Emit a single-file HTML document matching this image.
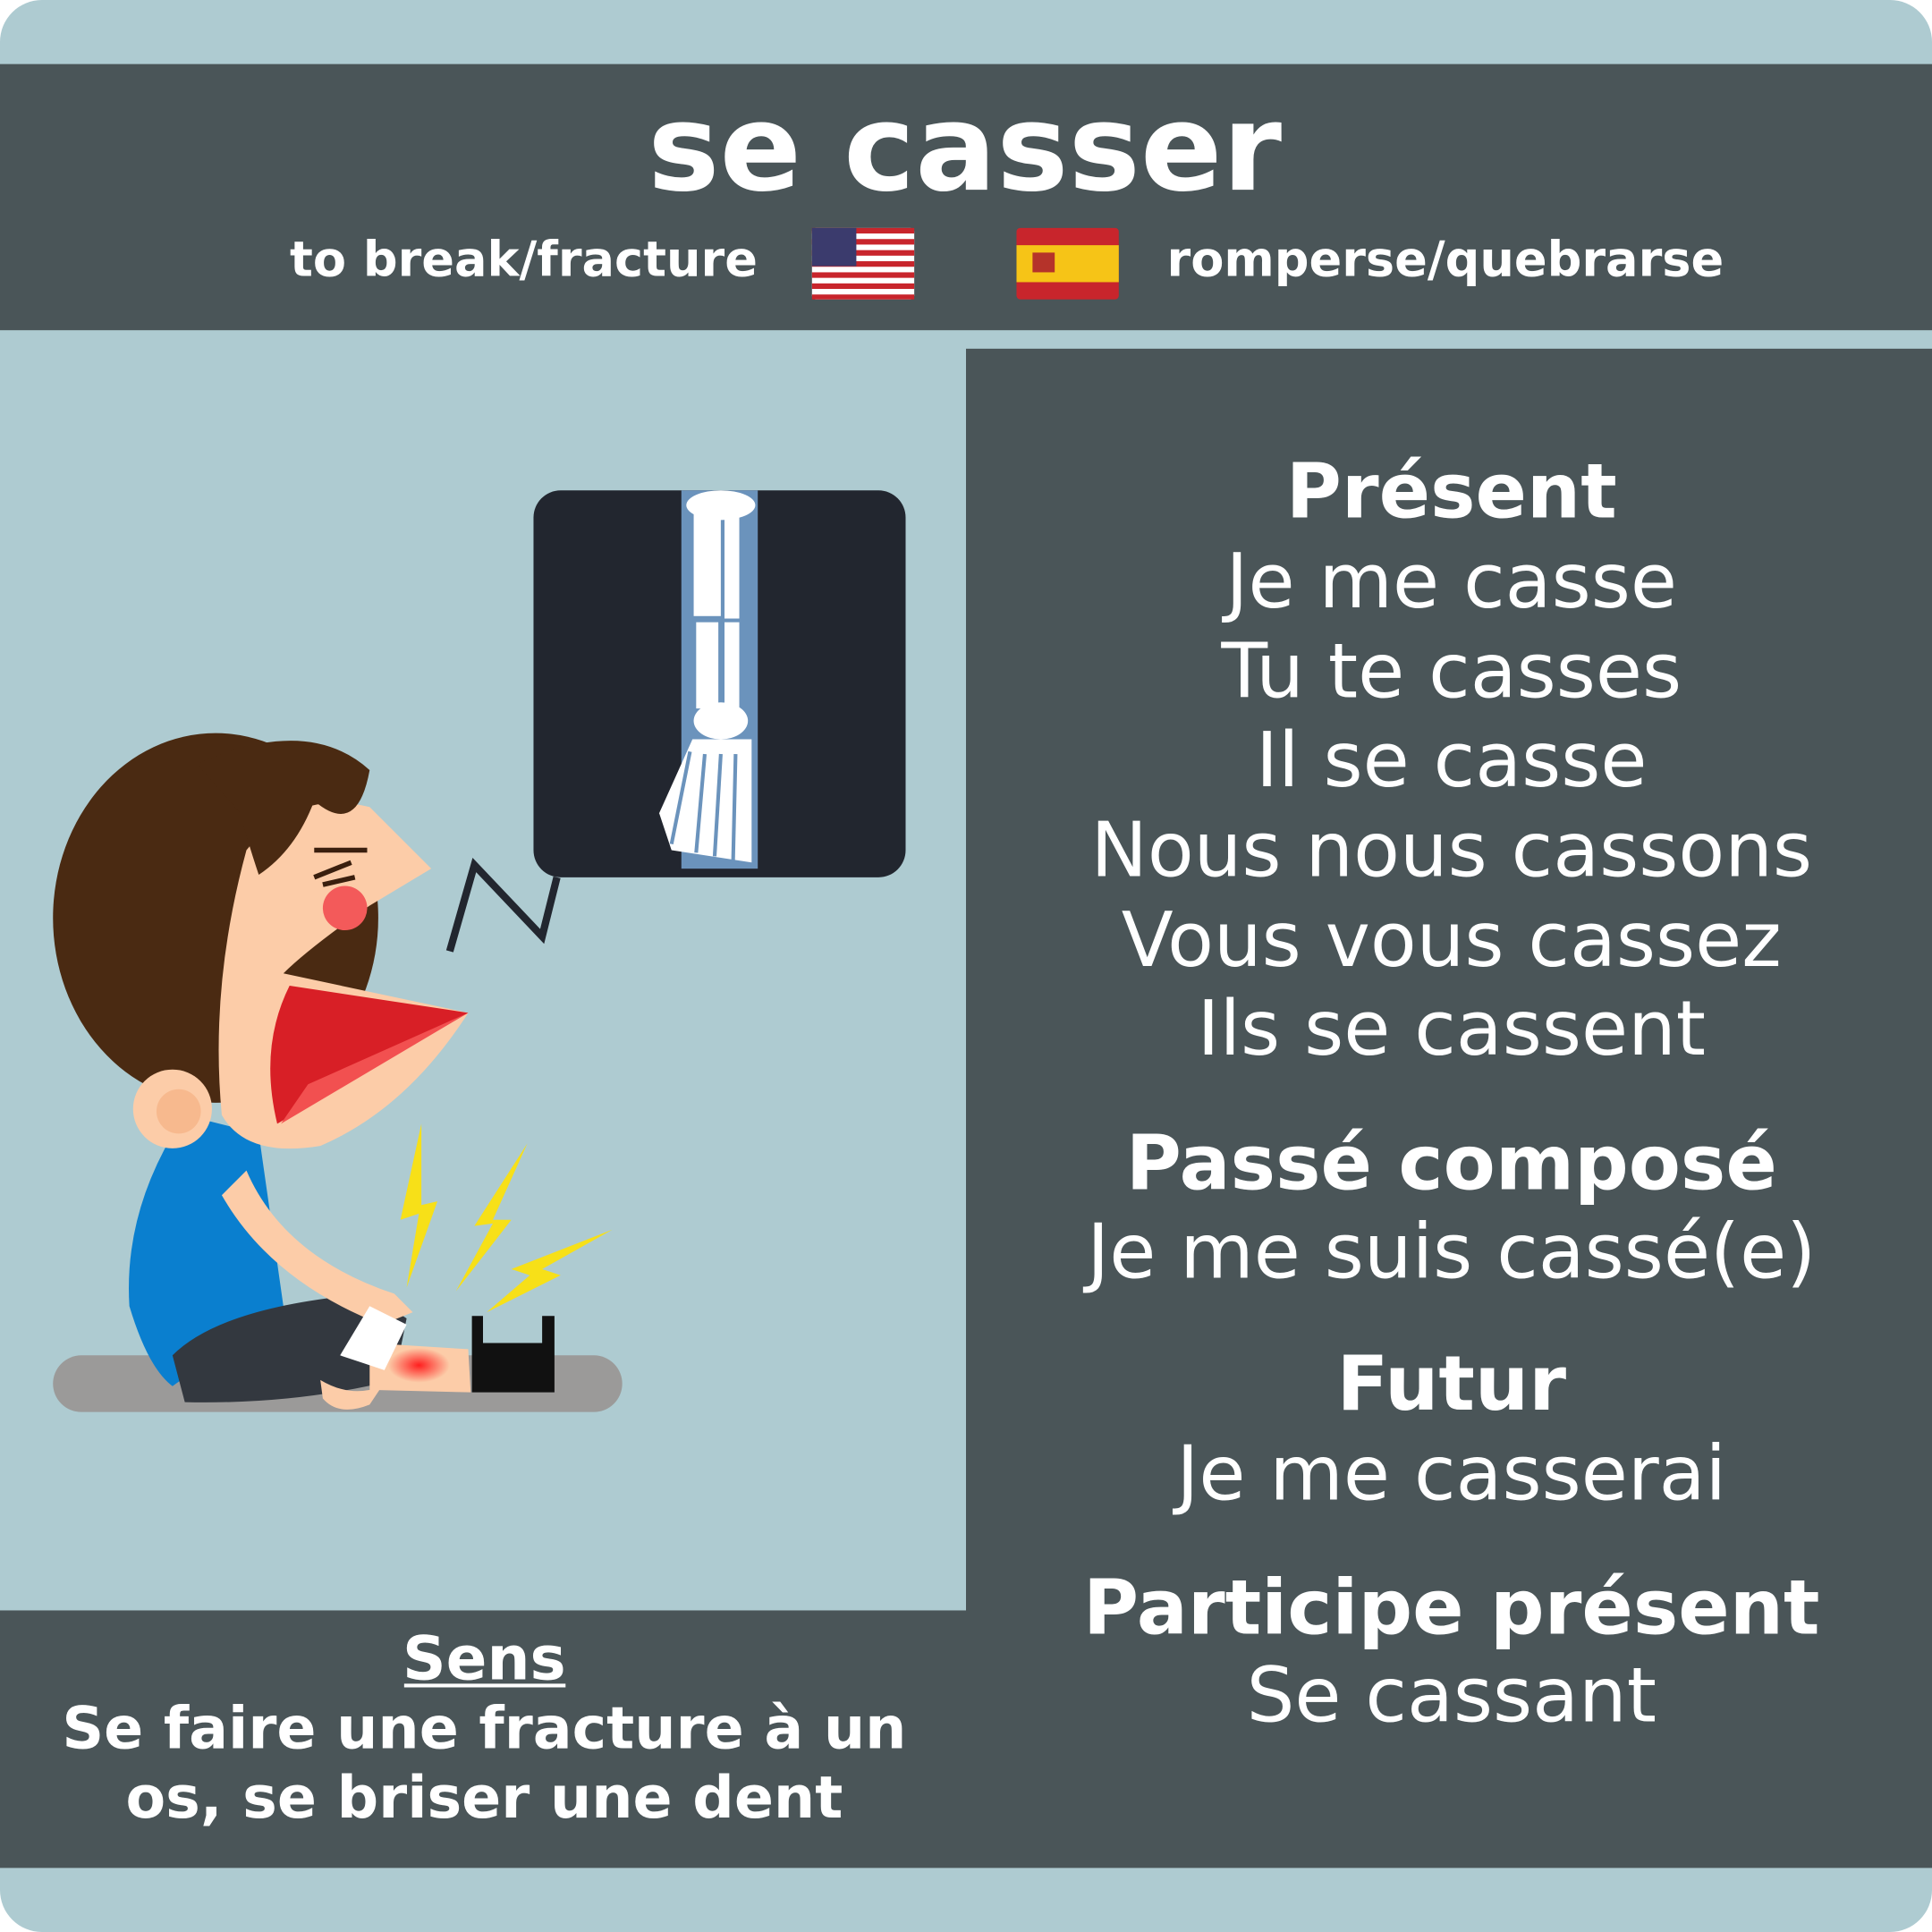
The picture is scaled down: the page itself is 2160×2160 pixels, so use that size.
<!DOCTYPE html>
<html><head><meta charset="utf-8"><style>
html,body{margin:0;padding:0;background:#fff;}
svg{display:block;}
text{font-family:"DejaVu Sans","Liberation Sans",sans-serif;fill:#fff;text-anchor:middle;}
</style></head><body>
<svg width="2160" height="2160" viewBox="0 0 1568 1568" xmlns="http://www.w3.org/2000/svg">
<defs><clipPath id="pg"><rect x="0" y="0" width="1568" height="1568" rx="34"/></clipPath>
<radialGradient id="glow"><stop offset="0" stop-color="#ff1f1f"/><stop offset="1" stop-color="#ff1f1f" stop-opacity="0"/></radialGradient></defs>
<g clip-path="url(#pg)">
<rect width="1568" height="1568" fill="#aecbd1"/>
<rect y="52" width="1568" height="216" fill="#4a5558"/>
<rect x="784" y="283" width="784" height="1233" fill="#4a5558"/>
<rect y="1307" width="784" height="209" fill="#4a5558"/>
</g>
<text x="783" y="154" font-size="98" font-weight="bold">se casser</text>
<text x="425" y="224" font-size="39.3" font-weight="bold">to break/fracture</text>
<text x="1173" y="224" font-size="39.3" font-weight="bold">romperse/quebrarse</text>
<g>
<rect x="659" y="185" width="83" height="58" fill="#fff" rx="3"/>
<g fill="#c8252c">
<rect x="659" y="185" width="83" height="4.5"/><rect x="659" y="194" width="83" height="4.5"/><rect x="659" y="203" width="83" height="4.5"/><rect x="659" y="212" width="83" height="4.5"/><rect x="659" y="221" width="83" height="4.5"/><rect x="659" y="230" width="83" height="4.5"/><rect x="659" y="239" width="83" height="4"/></g>
<rect x="659" y="185" width="36" height="31" fill="#3b3b6d"/>
</g>
<rect x="825" y="185" width="83" height="58" fill="#c8252c" rx="3"/>
<rect x="825" y="199" width="83" height="30" fill="#f6c417"/>
<rect x="838" y="205" width="18" height="16" fill="#b5332a"/>
<rect x="43" y="1100" width="462" height="46" rx="23" fill="#9b9a99"/>
<rect x="433" y="398" width="302" height="314" rx="22" fill="#22262f"/>
<polyline points="452,712 440,760 385,702 365,772" fill="none" stroke="#22262f" stroke-width="6"/>
<rect x="553" y="398" width="62" height="307" fill="#6b93bc"/>
<rect x="563" y="410" width="22" height="90" fill="#fff"/><rect x="588" y="410" width="12" height="92" fill="#fff"/>
<ellipse cx="585" cy="410" rx="28" ry="12" fill="#fff"/>
<rect x="565" y="505" width="18" height="70" fill="#fff"/><rect x="588" y="505" width="12" height="70" fill="#fff"/>
<ellipse cx="585" cy="585" rx="22" ry="15" fill="#fff"/>
<path d="M562,600 L610,600 L610,700 L545,690 L535,660 Z" fill="#fff"/>
<g stroke="#6b93bc" stroke-width="3"><line x1="560" y1="610" x2="545" y2="685"/><line x1="572" y1="612" x2="565" y2="692"/><line x1="585" y1="612" x2="580" y2="695"/><line x1="597" y1="612" x2="595" y2="698"/></g>
<path d="M150,905 Q100,980 105,1060 Q120,1110 140,1125 L230,1060 L210,920 Z" fill="#0a7fcf"/>
<path d="M140,1100 Q180,1060 300,1050 L330,1070 L320,1120 Q240,1140 150,1138 Z" fill="#33383f"/>
<path d="M200,950 Q230,1020 320,1050 L335,1065 L310,1075 Q220,1040 180,970 Z" fill="#fccca8"/>
<path d="M300,1090 L380,1095 L382,1130 L300,1128 Z" fill="#fccca8"/>
<ellipse cx="340" cy="1108" rx="25" ry="14" fill="url(#glow)"/>
<path d="M276,1100 L300,1060 L330,1075 L312,1112 Z" fill="#fff"/>
<path d="M383,1068 L392,1068 L392,1090 L440,1090 L440,1068 L450,1068 L450,1130 L383,1130 Z" fill="#111"/>
<path d="M260,1120 Q285,1135 310,1125 L300,1140 Q275,1150 262,1135 Z" fill="#fccca8"/>
<ellipse cx="175" cy="745" rx="132" ry="150" fill="#4a2a12"/>
<path d="M200,690 Q240,640 300,655 L350,705 L300,735 Q250,770 230,790 L380,822 Q330,900 260,930 Q200,940 180,905 Q170,800 200,690 Z" fill="#fccca8"/>
<path d="M235,800 L380,822 L225,912 Q210,850 235,800 Z" fill="#d81f26"/>
<path d="M250,880 L380,822 L228,912 Z" fill="#f25050"/>
<path d="M160,620 Q250,580 300,625 Q290,680 255,650 Q240,690 210,710 Q200,680 195,660 Z" fill="#4a2a12"/>
<path d="M255,690 L298,690 M255,712 L285,700 M262,718 L288,712" stroke="#3a1f0e" stroke-width="4" fill="none"/>
<circle cx="280" cy="737" r="18" fill="#f35a5a"/>
<circle cx="140" cy="900" r="32" fill="#fccca8"/>
<circle cx="145" cy="902" r="18" fill="#f7b98e"/>
<g fill="#f7e018">
<path d="M342,912 L325,990 L340,985 L330,1045 L355,975 L342,978 Z"/>
<path d="M428,928 L385,995 L400,993 L370,1048 L415,990 L400,990 Z"/>
<path d="M497,998 L415,1030 L430,1035 L395,1065 L455,1035 L440,1030 Z"/>
</g>
<text x="1178" y="420" font-size="61.5" font-weight="bold">Présent</text>
<g font-size="61.5">
<text x="1178" y="493">Je me casse</text>
<text x="1178" y="566">Tu te casses</text>
<text x="1178" y="638">Il se casse</text>
<text x="1178" y="711">Nous nous cassons</text>
<text x="1178" y="784">Vous vous cassez</text>
<text x="1178" y="856">Ils se cassent</text>
</g>
<text x="1178" y="965" font-size="61.5" font-weight="bold">Passé composé</text>
<text x="1178" y="1037" font-size="61.5">Je me suis cassé(e)</text>
<text x="1178" y="1144" font-size="61.5" font-weight="bold">Futur</text>
<text x="1178" y="1217" font-size="61.5">Je me casserai</text>
<text x="1178" y="1326" font-size="61.5" font-weight="bold">Participe présent</text>
<text x="1178" y="1397" font-size="61.5">Se cassant</text>
<text x="393" y="1363" font-size="49" font-weight="bold">Sens</text>
<line x1="328" y1="1368" x2="459" y2="1368" stroke="#fff" stroke-width="3"/>
<text x="393" y="1419" font-size="47.2" font-weight="bold">Se faire une fracture à un</text>
<text x="393" y="1475" font-size="47.2" font-weight="bold">os, se briser une dent</text>
</svg>
</body></html>
